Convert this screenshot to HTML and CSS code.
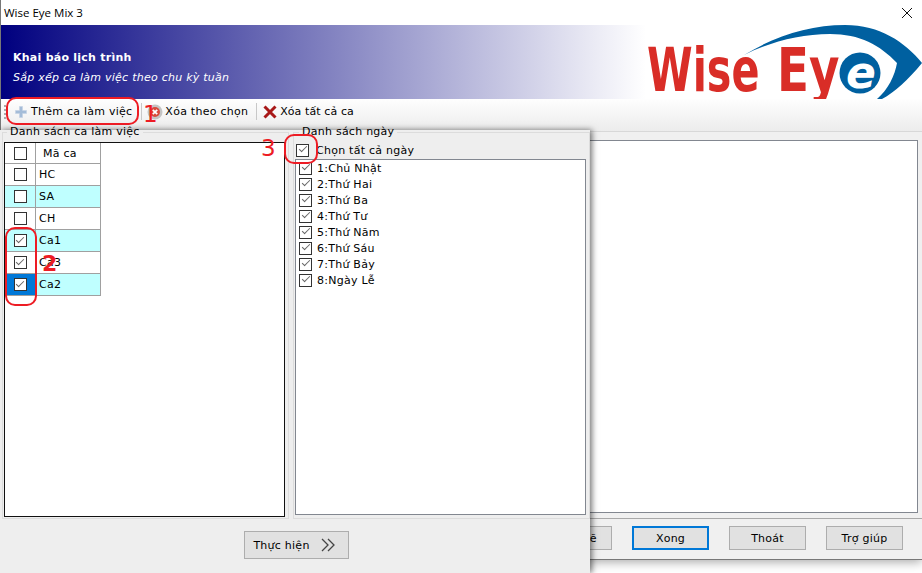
FILE: index.html
```html
<!DOCTYPE html>
<html lang="vi">
<head>
  <meta charset="UTF-8">
  <title>Wise Eye Mix 3</title>
  <link rel="stylesheet" href="styles.css">
</head>
<body>
  <div class="window">
    <div class="titlebar">
      <span class="title">Wise Eye Mix 3</span>
      <svg class="close" width="10" height="10" viewBox="0 0 10 10"><path d="M0 0L10 10M10 0L0 10" stroke="#111" stroke-width="1" fill="none"/></svg>
    </div>

    <div class="banner">
      <div class="banner-text">
        <h1>Khai báo lịch trình</h1>
        <p>Sắp xếp ca làm việc theo chu kỳ tuần</p>
      </div>
      <svg class="logo" width="277" height="74" viewBox="645 25 277 74">
        <path d="M744 55C775 36 810 25 845 25C880 25 905 42 922 63C908 80 895 92 882 99L877 99C888 90 895 75 897 63C880 45 860 34 830 34C800 34 770 42 744 55Z" fill="#0060a0"/>
        <text class="logo-text" transform="translate(647 91) scale(0.69 1)">Wise</text>
        <text class="logo-text" transform="translate(777 91) scale(0.78 1)">Ey</text>
        <circle cx="860" cy="73" r="20.5" fill="#0060a0"/>
        <text class="logo-e" x="846" y="88">e</text>
      </svg>
    </div>

    <div class="toolbar">
      <span class="grip"></span>
      <span class="tool tool-add">
        <svg width="12" height="12" viewBox="0 0 12 12"><path d="M4.5 0.5H7.5V4.5H11.5V7.5H7.5V11.5H4.5V7.5H0.5V4.5H4.5Z" fill="#a4bcd8" stroke="#c4d2e4" stroke-width="0.6"/></svg>
        Thêm ca làm việc
      </span>
      <span class="sep"></span>
      <span class="tool tool-del">
        <svg width="16" height="16" viewBox="0 0 16 16">
          <circle cx="8" cy="8" r="7.5" fill="#c4c4c4"/>
          <circle cx="8" cy="8" r="5" fill="#d84a3c"/>
          <path d="M5.8 5.8L10.2 10.2M10.2 5.8L5.8 10.2" stroke="#fff" stroke-width="1.8"/>
        </svg>
        Xóa theo chọn
      </span>
      <span class="sep sep-2"></span>
      <span class="tool tool-clear">
        <svg width="14" height="14" viewBox="0 0 14 14"><path d="M1.5 1.5L12.5 12.5M12.5 1.5L1.5 12.5" stroke="#a81818" stroke-width="3"/></svg>
        Xóa tất cả ca
      </span>
    </div>

    <div class="back-main">
      <div class="back-list"></div>
    </div>

    <div class="back-footer">
      <button class="btn">Bảng vẽ</button>
      <button class="btn btn-default">Xong</button>
      <button class="btn">Thoát</button>
      <button class="btn">Trợ giúp</button>
    </div>
  </div>

  <div class="dialog">
    <div class="groups">
      <fieldset class="group group-shifts">
        <legend>Danh sách ca làm việc</legend>
        <div class="grid-box">
          <table class="grid">
            <tr class="head"><td class="c"><span class="cb"></span></td><td class="name">Mã ca</td></tr>
            <tr><td class="c"><span class="cb"></span></td><td>HC</td></tr>
            <tr class="alt"><td class="c"><span class="cb"></span></td><td>SA</td></tr>
            <tr><td class="c"><span class="cb"></span></td><td>CH</td></tr>
            <tr class="alt"><td class="c"><span class="cb on"></span></td><td>Ca1</td></tr>
            <tr><td class="c"><span class="cb on"></span></td><td>Ca3</td></tr>
            <tr class="alt"><td class="c sel"><span class="cb on"></span></td><td>Ca2</td></tr>
          </table>
        </div>
      </fieldset>

      <fieldset class="group group-days">
        <legend>Danh sách ngày</legend>
        <div class="check-all"><span class="cb on"></span>Chọn tất cả ngày</div>
        <div class="days">
          <div class="day"><span class="cb on"></span>1:Chủ Nhật</div>
          <div class="day"><span class="cb on"></span>2:Thứ Hai</div>
          <div class="day"><span class="cb on"></span>3:Thứ Ba</div>
          <div class="day"><span class="cb on"></span>4:Thứ Tư</div>
          <div class="day"><span class="cb on"></span>5:Thứ Năm</div>
          <div class="day"><span class="cb on"></span>6:Thứ Sáu</div>
          <div class="day"><span class="cb on"></span>7:Thứ Bảy</div>
          <div class="day"><span class="cb on"></span>8:Ngày Lễ</div>
        </div>
      </fieldset>
    </div>

    <div class="dialog-footer">
      <button class="btn btn-run">
        Thực hiện
        <svg width="14" height="14" viewBox="0 0 14 14"><path d="M1 1L7 7L1 13M7 1L13 7L7 13" stroke="#444" stroke-width="1.3" fill="none"/></svg>
      </button>
    </div>
  </div>

  <div class="mark mark-1"></div>
  <div class="mark mark-2"></div>
  <div class="mark mark-3"></div>
  <span class="num num-1">1</span>
  <span class="num num-2">2</span>
  <span class="num num-3">3</span>
</body>
</html>
```

FILE: styles.css
```css
html, body {
  margin: 0;
  padding: 0;
}
body {
  position: relative;
  width: 922px;
  height: 573px;
  overflow: hidden;
  background-color: white;
  font-family: 'DejaVu Sans', sans-serif;
  font-size: 11px;
  letter-spacing: 0.25px;
  color: #000;
}
.window {
  display: flex;
  flex-direction: column;
  height: 559px;
  border-left: 1px solid #777;
  border-bottom: 1px solid #777;
  box-shadow: 0 2px 10px rgba(0,0,0,0.35);
  background-color: #f0f0f0;
}
.titlebar {
  display: flex;
  align-items: center;
  justify-content: space-between;
  height: 25px;
  padding: 0 10px 0 3px;
  background-color: white;
}
.title {
  font-family: 'Open Sans', sans-serif;
  font-size: 11.5px;
  letter-spacing: 0;
}
.banner {
  display: flex;
  justify-content: space-between;
  height: 74px;
  background: linear-gradient(to right, #00007f 0, white 645px);
}
.banner-text {
  padding: 25px 0 0 12px;
  color: white;
}
.banner-text h1 {
  margin: 0 0 6px;
  font-size: 11px;
  line-height: 15px;
  font-weight: bold;
}
.banner-text p {
  margin: 0;
  font-size: 11px;
  line-height: 14px;
  font-style: italic;
}
.logo {
  display: block;
  overflow: visible;
}
.logo-text {
  font-family: 'DejaVu Sans', sans-serif;
  font-size: 60px;
  font-weight: bold;
  letter-spacing: 0;
  fill: #d92d27;
}
.logo-e {
  font-family: 'DejaVu Sans', sans-serif;
  font-size: 44px;
  font-weight: bold;
  font-style: italic;
  letter-spacing: 0;
  fill: white;
}
.toolbar {
  display: flex;
  align-items: center;
  height: 25px;
  padding: 0 0 7px 3px;
  background: linear-gradient(to bottom, #fefefe, #ececec);
}
.grip {
  width: 2px;
  height: 14px;
  margin-right: 9px;
  background: repeating-linear-gradient(to bottom, #aaa 0, #aaa 2px, transparent 2px, transparent 4px);
}
.tool {
  display: flex;
  align-items: center;
  gap: 4px;
  white-space: nowrap;
}
.tool-del {
  gap: 2px;
}
.tool-clear {
  gap: 3px;
  letter-spacing: 0.1px;
}
.sep {
  width: 1px;
  height: 17px;
  margin: 0 5px 0 9px;
  background-color: #c8c8c8;
}
.sep-2 {
  margin: 0 6px 0 8px;
}
.back-main {
  flex: 1;
  display: flex;
  padding: 8px 4px 5px 0;
  border-top: 1px solid #d8d8d8;
  border-bottom: 1px solid #a8a8a8;
}
.back-list {
  flex: 1;
  background-color: white;
  border: 1px solid #828790;
}
.back-footer {
  display: flex;
  justify-content: flex-end;
  gap: 20px;
  height: 40px;
  padding: 7px 19px 0 0;
  box-sizing: border-box;
}
.btn {
  width: 77px;
  height: 24px;
  padding: 0;
  font-family: inherit;
  font-size: 11px;
  letter-spacing: inherit;
  color: #000;
  background-color: #e1e1e1;
  border: 1px solid #adadad;
}
.btn-default {
  border: 2px solid #0078d7;
}
.dialog {
  position: absolute;
  left: 0;
  top: 130px;
  display: flex;
  flex-direction: column;
  width: 590px;
  height: 443px;
  background-color: #eee;
  box-shadow: 2px 0 6px rgba(0,0,0,0.55);
}
.groups {
  display: flex;
  gap: 4px;
  height: 394px;
  margin-top: -5px;
  padding-left: 2px;
}
.group {
  margin: 0;
  padding: 0;
  border: 1px solid #dcdcdc;
  min-width: 0;
  box-sizing: border-box;
}
.group legend {
  margin-left: 4px;
  padding: 0 3px;
  font-size: 11px;
  line-height: 14px;
}
.group-shifts {
  width: 287px;
}
.group-days {
  flex: 1;
}
.group-days legend {
  margin-left: 5px;
}
.grid-box {
  width: 281px;
  height: 375px;
  margin: 3px 0 0 1px;
  box-sizing: border-box;
  background-color: white;
  border: 1px solid #111;
}
.grid {
  border-collapse: collapse;
}
.grid td {
  width: 57px;
  height: 21px;
  padding: 0 0 0 3px;
  border: 1px solid #a0a0a0;
}
.grid .head td {
  height: 20px;
  border-top: none;
}
.grid tr td:first-child {
  border-left: none;
}
.grid .name {
  padding-left: 7px;
}
.grid td.c {
  width: 30px;
  padding: 0;
  text-align: center;
}
.grid .alt td {
  background-color: #bfffff;
}
.grid .alt td.sel {
  background-color: #0078d7;
}
.cb {
  position: relative;
  display: inline-block;
  vertical-align: middle;
  box-sizing: border-box;
  width: 13px;
  height: 13px;
  background-color: white;
  border: 1px solid #333;
}
.cb.on::after {
  content: "";
  position: absolute;
  left: 1.5px;
  top: 1.5px;
  width: 7px;
  height: 3px;
  border-left: 1.5px solid #666;
  border-bottom: 1.5px solid #666;
  transform: rotate(-45deg);
}
.check-all {
  display: flex;
  align-items: center;
  gap: 7px;
  height: 16px;
  margin: 3px 0 0 2px;
}
.days {
  height: 356px;
  margin: 1px 3px 0 1px;
  box-sizing: border-box;
  background-color: white;
  border: 1px solid #828790;
}
.day {
  display: flex;
  align-items: center;
  gap: 5px;
  height: 16px;
  padding-left: 3px;
}
.dialog-footer {
  flex: 1;
  display: flex;
  justify-content: center;
  padding: 12px 0 0 3px;
}
.btn-run {
  display: flex;
  align-items: center;
  justify-content: center;
  gap: 11px;
  width: 105px;
  height: 28px;
  padding-right: 5px;
}
.mark {
  position: absolute;
  box-sizing: border-box;
  border: 2px solid #ed1c24;
  border-radius: 10px;
}
.mark-1 {
  left: 6px;
  top: 97px;
  width: 133px;
  height: 28px;
}
.mark-2 {
  left: 5px;
  top: 227px;
  width: 32px;
  height: 79px;
}
.mark-3 {
  left: 284px;
  top: 134px;
  width: 34px;
  height: 30px;
}
.num {
  position: absolute;
  font-family: 'DejaVu Sans', sans-serif;
  font-size: 23px;
  line-height: 24px;
  letter-spacing: 0;
  color: #ed1c24;
}
.num-1 {
  left: 143px;
  top: 102px;
}
.num-2 {
  left: 42px;
  top: 252px;
  font-weight: bold;
  font-size: 22px;
}
.num-3 {
  left: 261px;
  top: 136px;
}
```
